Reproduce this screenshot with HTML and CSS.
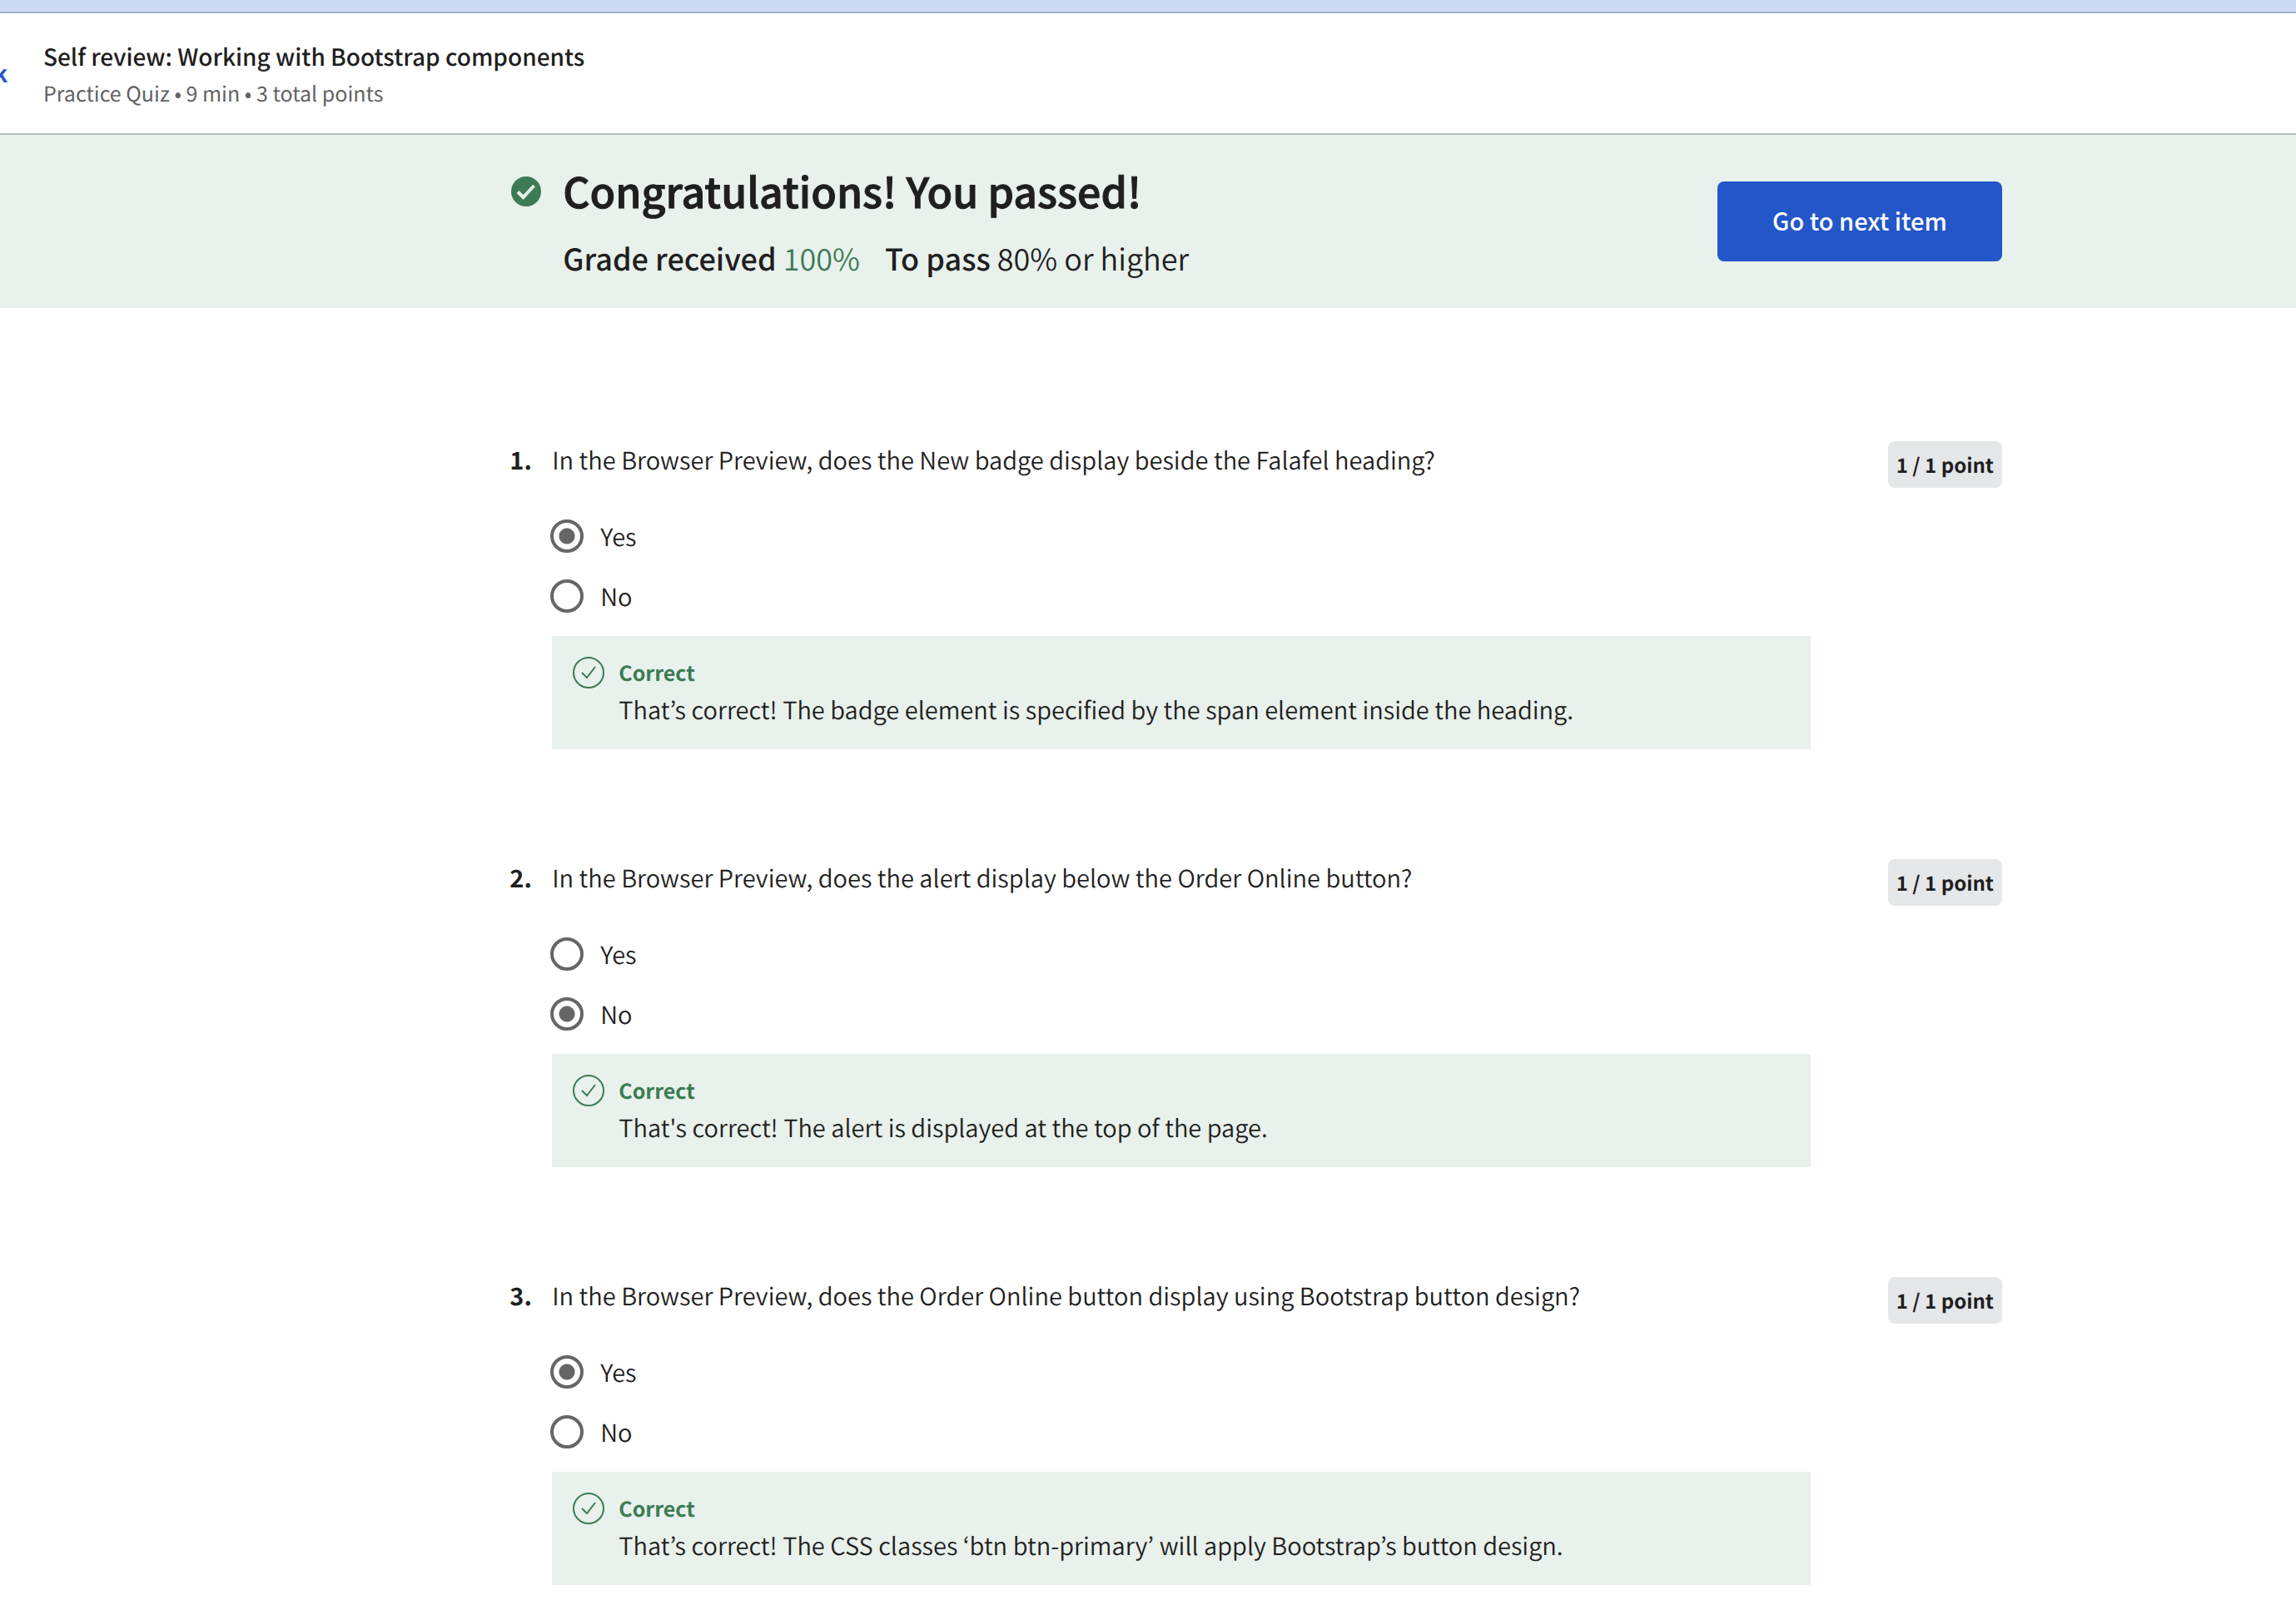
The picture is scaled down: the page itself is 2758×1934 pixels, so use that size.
FILE: index.html
```html
<!DOCTYPE html>
<html lang="en">
<head>
<meta charset="utf-8">
<title>Self review: Working with Bootstrap components</title>
<link rel="stylesheet" href="styles.css">
</head>
<body>
<div class="strip"></div>
<header class="topbar">
  <a class="back" href="#">Back</a>
  <div class="heading">
    <h1 class="title">Self review: Working with Bootstrap components</h1>
    <p class="meta">Practice Quiz • 9 min • 3 total points</p>
  </div>
</header>
<section class="banner">
  <div class="wrap banner-row">
    <svg class="passed" viewBox="0 0 40 40" aria-hidden="true"><circle cx="20" cy="20" r="18"/><path d="M10 20.500l6.500 6.500 13-14"/></svg>
    <div class="result">
      <h2 class="headline">Congratulations! You passed!</h2>
      <p class="grade"><span><b>Grade received</b> <span class="score">100%</span></span><span><b>To pass</b> 80% or higher</span></p>
    </div>
    <button class="next" type="button">Go to next item</button>
  </div>
</section>
<main class="wrap quiz">
  <section class="question">
    <span class="number">1.</span>
    <fieldset class="body">
      <legend class="prompt">In the Browser Preview, does the New badge display beside the Falafel heading?</legend>
      <label class="option"><input class="radio" type="radio" name="q1" checked>Yes</label>
      <label class="option"><input class="radio" type="radio" name="q1">No</label>
      <div class="feedback">
        <svg class="tick" viewBox="0 0 40 40" aria-hidden="true"><circle cx="20" cy="20" r="18"/><path d="M12 20l6 6 10-13"/></svg>
        <div><p class="verdict">Correct</p><p class="reason">That’s correct! The badge element is specified by the span element inside the heading.</p></div>
      </div>
    </fieldset>
    <span class="points">1 / 1 point</span>
  </section>
  <section class="question">
    <span class="number">2.</span>
    <fieldset class="body">
      <legend class="prompt">In the Browser Preview, does the alert display below the Order Online button?</legend>
      <label class="option"><input class="radio" type="radio" name="q2">Yes</label>
      <label class="option"><input class="radio" type="radio" name="q2" checked>No</label>
      <div class="feedback">
        <svg class="tick" viewBox="0 0 40 40" aria-hidden="true"><circle cx="20" cy="20" r="18"/><path d="M12 20l6 6 10-13"/></svg>
        <div><p class="verdict">Correct</p><p class="reason">That's correct! The alert is displayed at the top of the page.</p></div>
      </div>
    </fieldset>
    <span class="points">1 / 1 point</span>
  </section>
  <section class="question">
    <span class="number">3.</span>
    <fieldset class="body">
      <legend class="prompt">In the Browser Preview, does the Order Online button display using Bootstrap button design?</legend>
      <label class="option"><input class="radio" type="radio" name="q3" checked>Yes</label>
      <label class="option"><input class="radio" type="radio" name="q3">No</label>
      <div class="feedback">
        <svg class="tick" viewBox="0 0 40 40" aria-hidden="true"><circle cx="20" cy="20" r="18"/><path d="M12 20l6 6 10-13"/></svg>
        <div><p class="verdict">Correct</p><p class="reason">That’s correct! The CSS classes ‘btn btn-primary’ will apply Bootstrap’s button design.</p></div>
      </div>
    </fieldset>
    <span class="points">1 / 1 point</span>
  </section>
</main>
</body>
</html>
```

FILE: styles.css
```css
* { box-sizing: border-box; }
body { margin: 0; background: #fff; color: #1f1f1f; font: 350 29px/44px "Noto Sans CJK KR", sans-serif; text-rendering: geometricPrecision; overflow-x: hidden; }
h1, h2, p { margin: 0; }
.strip { height: 16px; background: #cedbf4; border-bottom: 2px solid #a5b0cc; }
.topbar { display: flex; align-items: center; gap: 46px; height: 146px; border-bottom: 2px solid #b9beba; }
.back { color: #2256c9; font-size: 28px; font-weight: 700; text-decoration: none; margin-left: -58px; width: 64px; text-align: right; }
.heading { padding-top: 3px; }
.title { font-size: 28px; font-weight: 500; }
.meta { color: #636363; font-size: 25px; font-weight: 400; }
.banner { background: #e8f1ec; padding: 36px 0 38px; }
.wrap { width: 65%; margin-left: 22.2%; }
.banner-row { display: flex; align-items: flex-start; }
.passed { width: 40px; height: 40px; margin-top: 12px; fill: #3d7b54; }
.passed path { fill: none; stroke: #e8f1ec; stroke-width: 4; }
.result { flex: 1; margin-left: 24px; }
.headline { font-size: 50px; font-weight: 500; line-height: 62px; -webkit-text-stroke: 1px; }
.grade { display: flex; gap: 30px; margin-top: 28px; font-size: 36px; }
.grade b { font-weight: 500; }
.score { color: #3d7b54; }
.next { width: 342px; height: 96px; margin-top: 20px; padding: 0 0 4px; border: 0; border-radius: 8px; background: #2256c9; color: #fff; font: inherit; font-weight: 500; }
.quiz { padding-top: 160px; }
.question { display: flex; align-items: flex-start; margin-bottom: 132px; }
.question:last-child { margin-bottom: 0; }
.number { width: 51px; font-weight: 700; }
.body { flex: 1; min-width: 0; max-width: 1512px; margin: 0; padding: 0; border: 0; }
.prompt { padding: 0 0 34px; }
.option { display: flex; align-items: center; gap: 20px; height: 72px; margin-left: -2px; }
.radio { appearance: none; width: 40px; height: 40px; margin: 0; border: 4px solid #666; border-radius: 50%; }
.radio:checked { background: radial-gradient(circle, #666 9px, transparent 10px); }
.feedback { display: flex; gap: 16px; margin-top: 12px; padding: 22px 24px 26px; background: #e8f1ec; }
.tick { width: 40px; height: 40px; margin-top: 2px; fill: none; stroke: #3d7b54; stroke-width: 2; }
.verdict { color: #3d7b54; font-weight: 700; font-size: 25px; }
.points { margin-left: auto; padding: 0 10px; border-radius: 8px; background: #e5e7e8; font-weight: 700; font-size: 24px; line-height: 56px; }
```
